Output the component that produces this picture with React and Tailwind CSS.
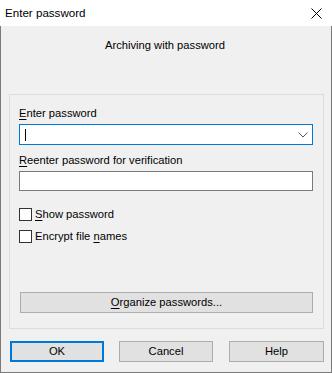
import React from 'react';

const font = { fontFamily: '"Liberation Sans", Arial, sans-serif' };

const U = ({ children }) => <span className="underline underline-offset-2">{children}</span>;

const Checkbox = ({ children }) => (
    <div className="flex items-center h-4">
        <div className="w-[13px] h-[13px] border border-[#333333] bg-white shrink-0" />
        <span className="ml-[3px] leading-4">{children}</span>
    </div>
);

const Button = ({ children, primary, className = '' }) => (
    <button
        className={`h-[21px] bg-[#e1e1e1] text-center leading-none ${primary ? 'border-2 border-[#0078d7]' : 'border border-[#adadad]'} ${className}`}
    >
        {children}
    </button>
);

export default function App() {
    return (
        <div className="w-[332px] h-[373px] flex flex-col text-[11.2px] text-black select-none" style={font}>
            {/* Title bar */}
            <div className="h-[26px] bg-white flex items-center justify-between shrink-0">
                <span className="pl-[5px] text-[11.6px] leading-4">Enter password</span>
                <svg width="11" height="11" viewBox="0 0 11 11" className="mr-[10px]">
                    <path d="M0.5 0.5 L10.5 10.5 M10.5 0.5 L0.5 10.5" stroke="#000" strokeWidth="1" fill="none" />
                </svg>
            </div>

            {/* Body */}
            <div className="flex-1 bg-[#f0f0f0] border-x border-b border-[#7a7a7a] flex flex-col">
                <div className="pt-[11px] text-center leading-4 pr-[2px]">Archiving with password</div>

                {/* Group box */}
                <div className="mt-[41px] ml-[8px] w-[315px] h-[235px] border border-[#dcdcdc] flex flex-col pl-[9px] pt-[10px]">
                    <div className="leading-4"><U>E</U>nter password</div>
                    <div className="mt-[3px] w-[294px] h-[21px] bg-white border border-[#0078d7] flex items-center justify-between pl-[5px] pr-[4px]">
                        <div className="w-px h-[12px] bg-black" />
                        <svg width="10" height="6" viewBox="0 0 10 6">
                            <path d="M0.5 0.5 L5 5 L9.5 0.5" stroke="#555" strokeWidth="1" fill="none" />
                        </svg>
                    </div>

                    <div className="mt-[7px] leading-4"><U>R</U>eenter password for verification</div>
                    <div className="mt-[3px] w-[294px] h-[20px] bg-white border border-[#7a7a7a]" />

                    <div className="mt-[15px] flex flex-col gap-[6px]">
                        <Checkbox><U>S</U>how password</Checkbox>
                        <Checkbox>Encrypt file <U>n</U>ames</Checkbox>
                    </div>

                    <Button className="mt-[48px] ml-px w-[293px]"><U>O</U>rganize passwords...</Button>
                </div>

                {/* Bottom buttons */}
                <div className="mt-[12px] ml-[9px] flex">
                    <Button primary className="w-[94px]">OK</Button>
                    <Button className="ml-[15px] w-[94px]">Cancel</Button>
                    <Button className="ml-[16px] w-[95px]">Help</Button>
                </div>
            </div>
        </div>
    );
}
